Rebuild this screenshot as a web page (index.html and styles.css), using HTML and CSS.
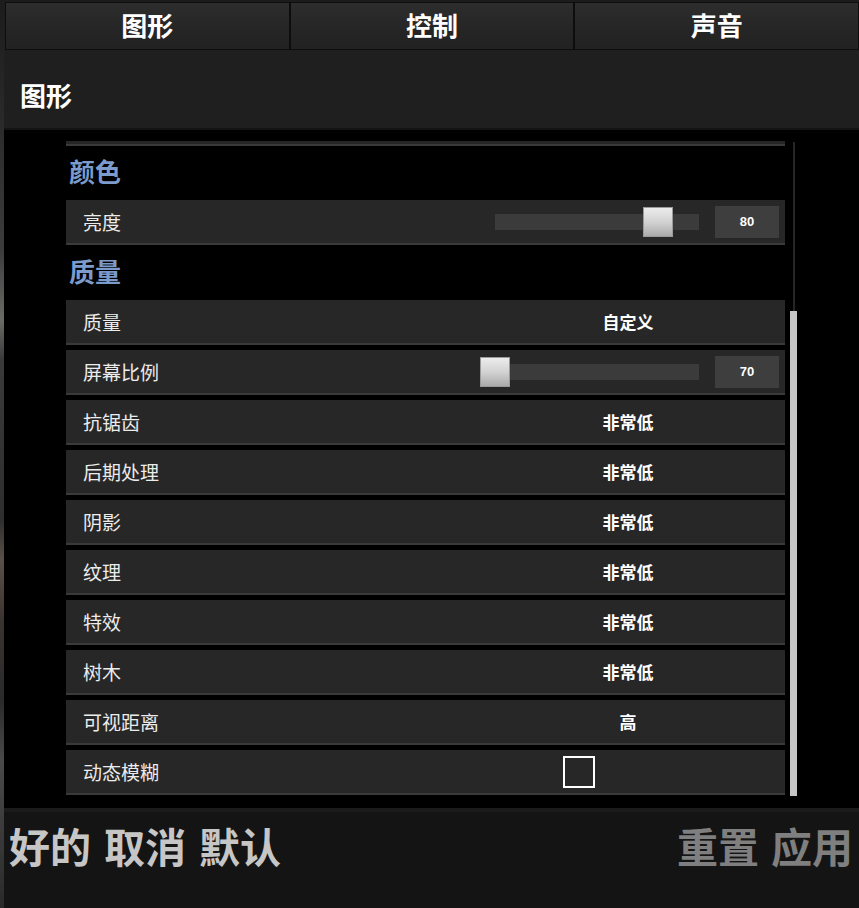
FILE: index.html
```html
<!DOCTYPE html>
<html lang="zh-CN">
<head>
<meta charset="utf-8">
<title>图形设置</title>
<link rel="stylesheet" href="styles.css">
</head>
<body>
<div class="window">
  <nav class="tabs">
    <div class="tab">图形</div>
    <div class="tab">控制</div>
    <div class="tab">声音</div>
  </nav>
  <header class="header">图形</header>
  <main class="content">
    <div class="list">
      <div class="topbar"></div>
      <h2 class="section">颜色</h2>
      <div class="row">
        <span class="label">亮度</span>
        <div class="track"><div class="thumb" style="left:80%"></div></div>
        <div class="num">80</div>
      </div>
      <h2 class="section">质量</h2>
      <div class="row"><span class="label">质量</span><span class="value">自定义</span></div>
      <div class="row">
        <span class="label">屏幕比例</span>
        <div class="track"><div class="thumb" style="left:0%"></div></div>
        <div class="num">70</div>
      </div>
      <div class="row"><span class="label">抗锯齿</span><span class="value">非常低</span></div>
      <div class="row"><span class="label">后期处理</span><span class="value">非常低</span></div>
      <div class="row"><span class="label">阴影</span><span class="value">非常低</span></div>
      <div class="row"><span class="label">纹理</span><span class="value">非常低</span></div>
      <div class="row"><span class="label">特效</span><span class="value">非常低</span></div>
      <div class="row"><span class="label">树木</span><span class="value">非常低</span></div>
      <div class="row"><span class="label">可视距离</span><span class="value">高</span></div>
      <div class="row"><span class="label">动态模糊</span><span class="checkbox"></span></div>
    </div>
    <div class="scroll">
      <div class="scroll-line"></div>
      <div class="scroll-thumb"></div>
    </div>
  </main>
  <footer class="footer">
    <div class="btns">
      <span class="btn">好的</span>
      <span class="btn">取消</span>
      <span class="btn">默认</span>
    </div>
    <div class="btns dim">
      <span class="btn">重置</span>
      <span class="btn">应用</span>
    </div>
  </footer>
</div>
</body>
</html>
```

FILE: styles.css
```css
* { box-sizing: border-box; }

html, body {
  margin: 0;
  padding: 0;
  width: 859px;
  height: 908px;
  overflow: hidden;
}

body {
  font-family: "Noto Sans CJK SC", "Noto Sans", sans-serif;
  background: linear-gradient(180deg,
    #1c1c1c 0px, #2a2a2a 120px, #3c3c3c 250px, #6a6a66 320px,
    #3a3a3a 360px, #2e2e2e 520px, #5a5048 560px, #3a3430 620px,
    #2a2a2a 700px, #4a4a4a 760px, #2a2a2a 908px);
  color: #fff;
}

.window {
  margin: 2px 0 0 4px;
  height: 906px;
  display: flex;
  flex-direction: column;
}

/* Tabs */
.tabs {
  height: 48px;
  display: flex;
  margin-left: 1px;
}

.tab {
  flex: 1;
  display: flex;
  align-items: center;
  justify-content: center;
  padding-bottom: 4px;
  border: 1px solid #0d0d0d;
  background: linear-gradient(180deg, #2d2d2d 0%, #252525 60%, #222 100%);
  font-size: 26px;
  font-weight: 700;
  color: #fff;
}

/* Header */
.header {
  height: 80px;
  background: #1f1f1f;
  border-bottom: 2px solid #141414;
  padding: 11px 0 0 16px;
  display: flex;
  align-items: center;
  font-size: 26px;
  font-weight: 700;
  color: #fff;
}

/* Content */
.content {
  height: 678px;
  background: #000;
  display: flex;
}

.list {
  width: 719px;
  margin-left: 62px;
  padding-top: 11px;
}

.topbar {
  height: 5px;
  background: #262626;
  border-bottom: 2px solid #3a3a3a;
  margin-bottom: 4px;
}

.section {
  margin: 0;
  height: 50px;
  display: flex;
  align-items: center;
  padding: 0 0 9px 3px;
  font-size: 26px;
  font-weight: 700;
  color: #7c9bcb;
}

.row {
  height: 45px;
  margin-bottom: 5px;
  background: #272727;
  border-bottom: 2px solid #3a3a3a;
  display: grid;
  grid-template-columns: 412px 204px 16px 64px;
  align-items: center;
  padding: 0 6px 0 17px;
}

.label {
  font-size: 19px;
  color: #ececec;
}

.value {
  grid-column: 2 / 5;
  text-align: center;
  padding-right: 18px;
  font-size: 17px;
  font-weight: 700;
  color: #fff;
}

.track {
  position: relative;
  height: 16px;
  background: #3b3b3b;
}

.thumb {
  position: absolute;
  top: -7px;
  width: 30px;
  height: 30px;
  transform: translateX(-50%);
  background: linear-gradient(180deg, #ececec 0%, #d2d2d2 50%, #aaaaaa 100%);
  border: 1px solid #9a9a9a;
}

.num {
  grid-column: 4;
  height: 32px;
  background: #3e3e3e;
  display: flex;
  align-items: center;
  justify-content: center;
  font-family: "Liberation Sans", Arial, sans-serif;
  font-size: 13px;
  font-weight: 700;
  color: #fff;
}

.checkbox {
  grid-column: 2 / 5;
  justify-self: start;
  margin-left: 68px;
  width: 32px;
  height: 32px;
  border: 2px solid #fff;
}

/* Scrollbar */
.scroll {
  width: 7px;
  margin: 12px 0 0 5px;
  height: 654px;
  display: flex;
  flex-direction: column;
}

.scroll-line {
  height: 169px;
  width: 2px;
  margin-left: 3px;
  background: #262626;
}

.scroll-thumb {
  flex: 1;
  background: #c6c6c6;
}

/* Footer */
.footer {
  height: 100px;
  background: #141414;
  border-top: 4px solid #1b1b1b;
  display: flex;
  justify-content: space-between;
  align-items: flex-start;
  padding: 13px 6px 0 5px;
}

.btns {
  display: flex;
  gap: 13px;
  font-size: 41px;
  line-height: 41px;
  font-weight: 700;
  color: #c6c6c6;
}

.btns.dim {
  gap: 12px;
  color: #7f7f7f;
}
```
